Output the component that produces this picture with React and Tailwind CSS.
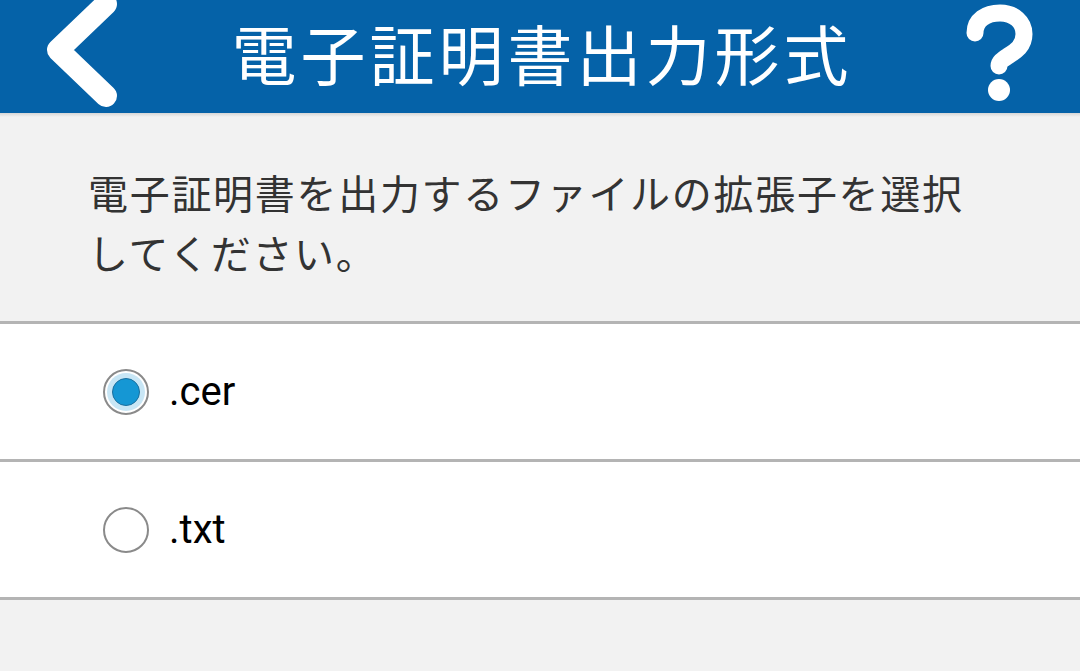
import React, { useState } from 'react';

const jp = { fontFamily: '"Noto Sans CJK JP", "Noto Sans", sans-serif' };
const latin = { fontFamily: 'Roboto, "Noto Sans", sans-serif' };

const Radio = ({ checked }) => (
    <span className="relative flex h-[46px] w-[46px] shrink-0 items-center justify-center rounded-full border-[2px] border-[#8a8a8a] bg-white">
        {checked && (
            <>
                <span className="absolute inset-[2px] rounded-full bg-[#c8e6f5]" />
                <span className="relative h-[28px] w-[28px] rounded-full border border-[#1a6f9e] bg-[#1597d4]" />
            </>
        )}
    </span>
);

const App = () => {
    const [ext, setExt] = useState('cer');
    const options = ['cer', 'txt'];

    return (
        <div className="h-[671px] w-[1080px] overflow-hidden bg-[#f2f2f2]">
            <header className="relative flex h-[113px] items-center justify-center bg-[#0562a8] pb-[8px]">
                <svg className="absolute left-[40px] top-[-6px]" width="84" height="116" viewBox="0 0 84 116">
                    <path d="M66 10 L18 56 L66 102" fill="none" stroke="#fff" strokeWidth="22" strokeLinecap="round" strokeLinejoin="round" />
                </svg>
                <h1 className="pl-[4px] text-[65px] leading-none tracking-[4px] text-white" style={jp}>電子証明書出力形式</h1>
                <svg className="absolute left-[960px] top-0" width="80" height="110" viewBox="0 0 80 110">
                    <path d="M15 33 C15 20 26 13 40 13 C54 13 64 22 64 34 C64 46 56 51 48 56 C42 60 39 62 39 66" fill="none" stroke="#fff" strokeWidth="17" strokeLinecap="round" />
                    <circle cx="39" cy="90" r="11" fill="#fff" />
                </svg>
            </header>
            <div className="h-[4px] bg-gradient-to-b from-[#d6d6d6] to-[#f2f2f2]" />
            <p className="px-[88px] pb-[39px] pt-[45px] text-[40px] leading-[60px] tracking-[1.7px] text-[#333]" style={jp}>
                電子証明書を出力するファイルの拡張子を選択<br />してください。
            </p>
            <div className="border-t-[3px] border-[#b4b4b4]">
                {options.map(o => (
                    <button
                        key={o}
                        onClick={() => setExt(o)}
                        className="flex h-[138px] w-full items-center gap-[20px] border-b-[3px] border-[#b4b4b4] bg-white pl-[103px] text-left"
                    >
                        <Radio checked={ext === o} />
                        <span className="text-[40px] text-black" style={latin}>.{o}</span>
                    </button>
                ))}
            </div>
        </div>
    );
};
export default App;
